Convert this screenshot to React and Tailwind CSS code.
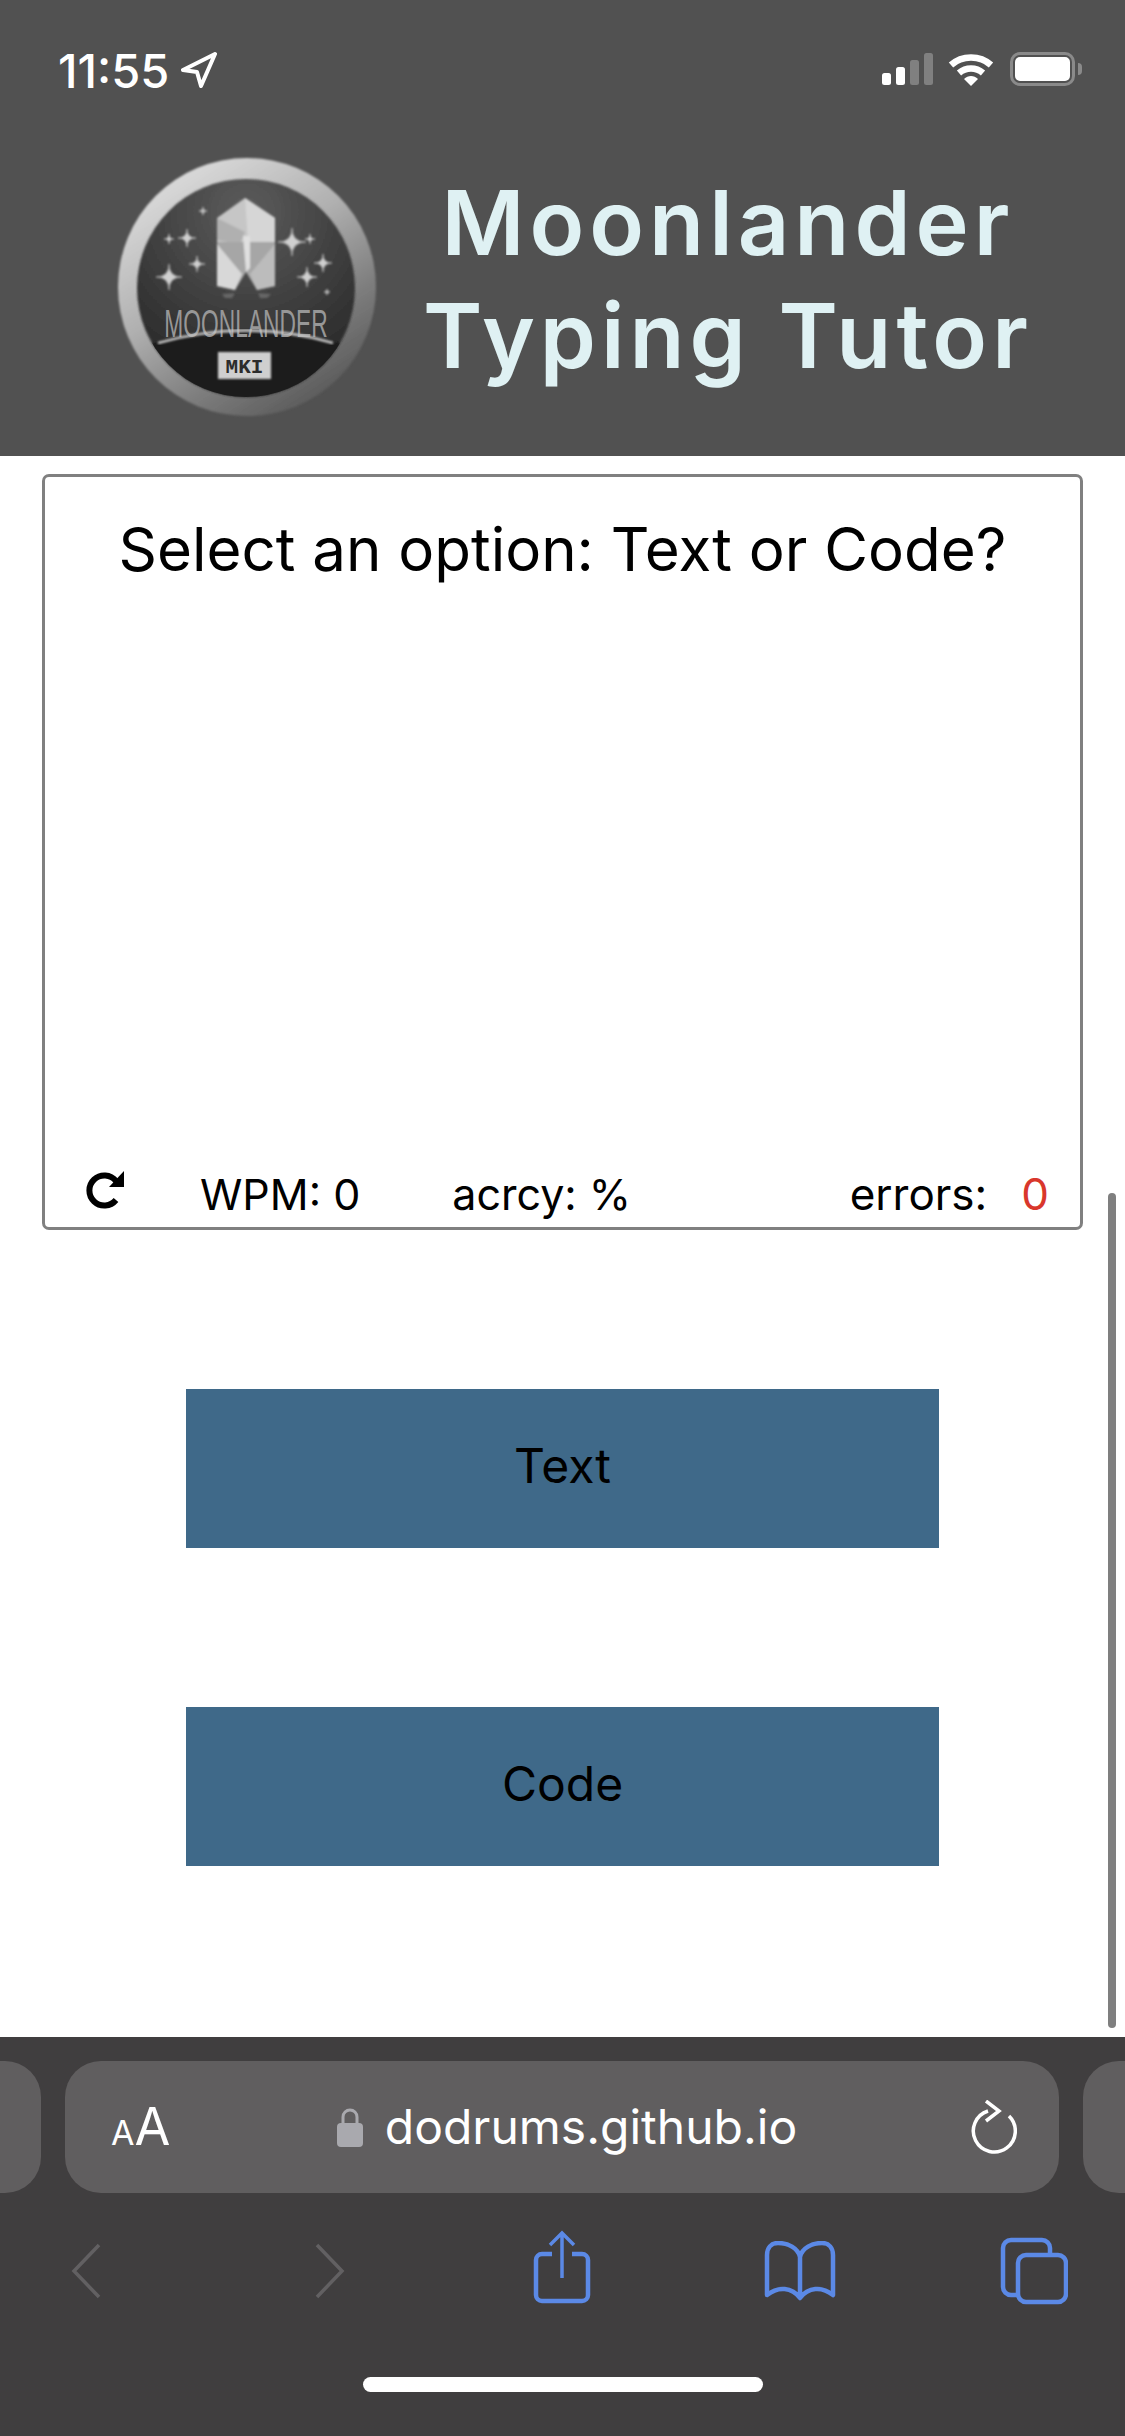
const font = { fontFamily: 'Inter, "Noto Sans", sans-serif' };

function Logo() {
  const stars = [
    [79, 137, 13],
    [97, 98, 9],
    [79, 99, 5],
    [107, 124, 8],
    [113, 71, 4],
    [202, 102, 14],
    [220, 99, 5],
    [233, 123, 9],
    [217, 137, 10],
    [237, 152, 3],
  ];
  return (
    <svg viewBox="0 0 310 300" className="w-[310px] h-[300px] shrink-0">
      <defs>
        <linearGradient id="ring" x1="0.2" y1="0.1" x2="0.75" y2="0.95">
          <stop offset="0" stopColor="#d8d8d8" />
          <stop offset="0.4" stopColor="#b0b0b0" />
          <stop offset="0.75" stopColor="#7c7c7c" />
          <stop offset="1" stopColor="#5c5c5c" />
        </linearGradient>
        <radialGradient id="face" cx="0.5" cy="0.15" r="0.9">
          <stop offset="0" stopColor="#5c5c5c" />
          <stop offset="0.55" stopColor="#3c3c3c" />
          <stop offset="1" stopColor="#222" />
        </radialGradient>
        <filter id="soft"><feGaussianBlur stdDeviation="1" /></filter>
        <clipPath id="faceClip"><circle cx="156" cy="148" r="109" /></clipPath>
      </defs>
      <circle cx="157" cy="147" r="129" fill="url(#ring)" filter="url(#soft)" />
      <circle cx="156" cy="148" r="109" fill="url(#face)" filter="url(#soft)" />
      <path d="M40 208 Q156 178 272 208 V270 H40 Z" fill="#1c1c1c" clipPath="url(#faceClip)" filter="url(#soft)" />
      <g filter="url(#soft)">
        <path d="M155 58 L185 78 V102 L127 102 V78 Z" fill="#c6c6c6" />
        <path d="M155 58 L158 102 H185 V78 Z" fill="#d6d6d6" />
        <path d="M127 78 L155 92 L150 104 L127 100 Z" fill="#b0b0b0" />
        <path d="M127 102 H185 V146 L167 150 L156 132 L145 150 L127 146 Z" fill="#a6a6a6" />
        <path d="M127 104 L152 134 L145 150 L127 146 Z" fill="#d8d8d8" />
        <path d="M185 104 L160 134 L167 150 L185 146 Z" fill="#bcbcbc" />
        <path d="M153 96 H160 V128 L156 132 Z" fill="#e0e0e0" />
        <path d="M132 154 L145 153 L142 158 H135 Z M168 153 L181 154 L177 158 H170 Z" fill="#666" />
        {stars.map(([x, y, s]) => (
          <path
            key={x + '-' + y}
            d={`M${x - s} ${y} Q${x} ${y} ${x} ${y - s} Q${x} ${y} ${x + s} ${y} Q${x} ${y} ${x} ${y + s} Q${x} ${y} ${x - s} ${y} Z`}
            fill="#d0d0d0"
            stroke="#b0b0b0"
            strokeWidth="0.8"
          />
        ))}
      </g>
      <text
        transform="translate(156 197) scale(0.6 1)"
        textAnchor="middle"
        fontSize="38"
        fill="#979797"
        fontFamily="Liberation Sans, sans-serif"
      >
        MOONLANDER
      </text>
      <path d="M68 203 Q156 178 243 203" fill="none" stroke="#c8c8c8" strokeWidth="2.5" filter="url(#soft)" />
      <rect x="128" y="212" width="53" height="27" fill="#cfcfcf" filter="url(#soft)" />
      <text
        x="154.5"
        y="233"
        textAnchor="middle"
        fontSize="21"
        fontWeight="700"
        fill="#2c2c2c"
        fontFamily="Liberation Mono, monospace"
      >
        MKI
      </text>
    </svg>
  );
}

function StatusIcons() {
  return (
    <div className="flex items-center">
      <svg viewBox="0 0 52 34" className="w-[52px] h-[34px]">
        <rect x="0" y="21" width="9" height="12" rx="2.5" fill="#fff" />
        <rect x="14" y="15" width="9" height="18" rx="2.5" fill="#fff" />
        <rect x="28" y="8" width="9" height="25" rx="2.5" fill="#808080" />
        <rect x="42" y="1" width="9" height="32" rx="2.5" fill="#808080" />
      </svg>
      <svg viewBox="0 0 46 34" className="w-[46px] h-[34px] ml-[14px]">
        <path d="M3 13 C14 3 32 3 43 13" fill="none" stroke="#fff" strokeWidth="6.5" />
        <path d="M11 21 C18 15 28 15 35 21" fill="none" stroke="#fff" strokeWidth="6.5" />
        <path d="M16 27 C20 23 26 23 30 27 L23 34 Z" fill="#fff" />
      </svg>
      <div className="ml-[16px] w-[65px] h-[34px] border-[3px] border-[#8a8a8a] rounded-[10px] p-[2px]">
        <div className="w-full h-full bg-white rounded-[5px]" />
      </div>
      <div className="ml-[3px] w-[4px] h-[12px] bg-[#8a8a8a] rounded-r-full" />
    </div>
  );
}

function Scrollbar() {
  return <div className="absolute left-[1108px] top-[1193px] w-[8px] h-[835px] rounded-full bg-[#7f7f7f]" />;
}

export default function App() {
  return (
    <div className="relative w-[1125px] h-[2436px] flex flex-col bg-white overflow-hidden" style={font}>
      <header className="bg-[#515151] h-[456px] shrink-0">
        <div className="h-[140px] pt-[52px] pl-[58px] pr-[43px] flex justify-between items-start">
          <div className="flex items-center text-white">
            <span className="text-[47px] leading-[35px] font-medium">11:55</span>
            <svg viewBox="0 0 36 36" className="w-[36px] h-[36px] ml-[12px]">
              <path d="M34 2 L2 18 L16 20 L20 34 Z" fill="none" stroke="#fff" strokeWidth="4" strokeLinejoin="round" />
            </svg>
          </div>
          <StatusIcons />
        </div>
        <div className="flex items-center pl-[90px] pr-[69px]">
          <Logo />
          <h1 className="flex-1 -mt-[22px] text-center text-[90px] leading-[113px] tracking-[5px] font-semibold text-[#dff1f3]">
            Moonlander
            <br />
            Typing Tutor
          </h1>
        </div>
      </header>

      <main className="flex-1 flex flex-col">
        <section className="mx-[42px] mt-[18px] h-[756px] border-[3px] border-[#808080] rounded-[7px] flex flex-col justify-between text-black">
          <p className="pt-[36px] text-center text-[60px] leading-[72px]">Select an option: Text or Code?</p>
          <div className="flex items-center pb-[5px] text-[43px] leading-[56px]">
            <svg viewBox="0 0 42 42" className="ml-[39px] w-[42px] h-[42px] -mt-[8px]">
              <path d="M32 12 A15 15 0 1 0 32 31" fill="none" stroke="#000" strokeWidth="6" />
              <path d="M40 2 V18 H25 Z" fill="#000" />
            </svg>
            <span className="ml-[74px]">WPM: 0</span>
            <span className="ml-[92px]">acrcy: %</span>
            <span className="ml-auto text-[44px]">errors:</span>
            <span className="ml-[34px] mr-[31px] text-[44px] text-[#d9372c]">0</span>
          </div>
        </section>

        <div className="mt-[159px] flex flex-col items-center gap-[159px]">
          <button className="w-[753px] h-[159px] pb-[6px] bg-[#3f6989] text-[48px] text-black">Text</button>
          <button className="w-[753px] h-[159px] pb-[6px] bg-[#3f6989] text-[48px] text-black">Code</button>
        </div>
      </main>

      <footer className="h-[399px] shrink-0 bg-[#403e3f] pt-[24px]">
        <div className="flex gap-[24px] h-[132px]">
          <div className="w-[41px] bg-[#605e5f] rounded-r-[36px]" />
          <div className="flex-1 bg-[#605e5f] rounded-[36px] flex items-center pl-[46px] pr-[42px] text-white">
            <span className="w-[60px] flex items-baseline">
              <span className="text-[34px]">A</span>
              <span className="text-[52px]">A</span>
            </span>
            <div className="flex-1 flex items-center justify-center pr-[8px]">
              <svg viewBox="0 0 26 40" className="w-[26px] h-[40px]">
                <path d="M6 18 V10 A7 7 0 0 1 20 10 V18" fill="none" stroke="#a9a9ae" strokeWidth="3" />
                <rect x="0" y="16" width="26" height="24" rx="4" fill="#a9a9ae" />
              </svg>
              <span className="ml-[22px] text-[48px] leading-[60px]">dodrums.github.io</span>
            </div>
            <svg viewBox="0 0 46 54" className="w-[46px] h-[54px]">
              <path d="M17 11 A21 21 0 1 0 38 16" fill="none" stroke="#fff" strokeWidth="3.5" />
              <path d="M15 1 L28 11 L15 21" fill="none" stroke="#fff" strokeWidth="3.5" />
            </svg>
          </div>
          <div className="w-[42px] bg-[#605e5f] rounded-l-[36px]" />
        </div>

        <div className="flex items-center h-[110px] mt-[23px] pl-[71px] pr-[57px] text-[#5b89e6]">
          <svg viewBox="0 0 30 56" className="w-[30px] h-[56px]">
            <path d="M28 2 L3 28 L28 54" fill="none" stroke="#626062" strokeWidth="3.5" />
          </svg>
          <svg viewBox="0 0 30 56" className="ml-[214px] w-[30px] h-[56px]">
            <path d="M2 2 L27 28 L2 54" fill="none" stroke="#626062" strokeWidth="3.5" />
          </svg>
          <svg viewBox="0 0 58 74" className="ml-[188px] w-[58px] h-[74px] -mt-[8px]">
            <path d="M19 24 H9 A6 6 0 0 0 3 30 V65 A6 6 0 0 0 9 71 H49 A6 6 0 0 0 55 65 V30 A6 6 0 0 0 49 24 H39" fill="none" stroke="currentColor" strokeWidth="4.5" />
            <path d="M29 48 V3 M17 15 L29 3 L41 15" fill="none" stroke="currentColor" strokeWidth="3.5" />
          </svg>
          <svg viewBox="0 0 72 60" className="ml-[173px] w-[72px] h-[60px]">
            <path d="M36 16 C34 7 24 2 14 2 C7 2 3 7 3 14 V54 C14 45 28 46 36 57 C44 46 58 45 69 54 V14 C69 7 65 2 58 2 C48 2 38 7 36 16 V57" fill="none" stroke="currentColor" strokeWidth="4.5" strokeLinejoin="round" />
          </svg>
          <svg viewBox="0 0 68 68" className="ml-auto w-[68px] h-[68px]">
            <path d="M18 58 H11 A8 8 0 0 1 3 50 V11 A8 8 0 0 1 11 3 H42 A8 8 0 0 1 50 11 V18" fill="none" stroke="currentColor" strokeWidth="4.5" />
            <rect x="18" y="18" width="48" height="47" rx="8" fill="none" stroke="currentColor" strokeWidth="4.5" />
          </svg>
        </div>

        <div className="mt-[51px] mx-auto w-[400px] h-[15px] bg-white rounded-full" />
      </footer>

      <Scrollbar />
    </div>
  );
}
